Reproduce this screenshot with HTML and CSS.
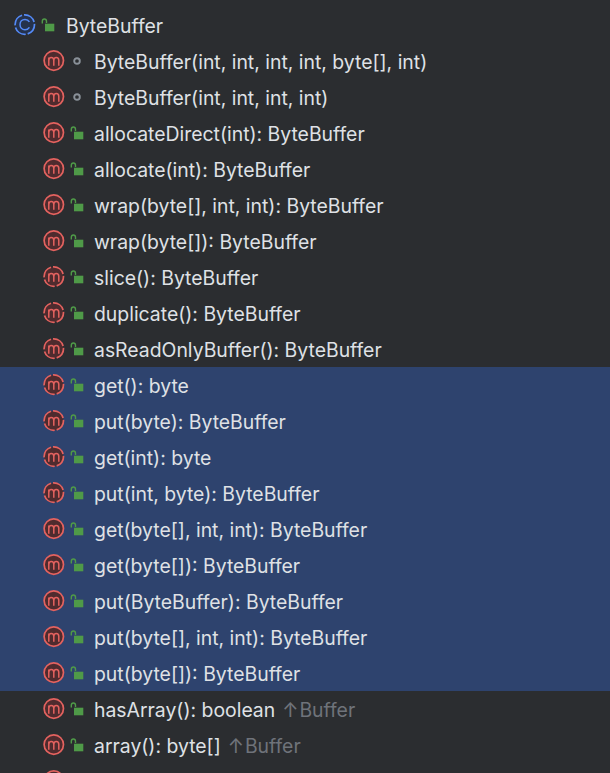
FILE: index.html
```html
<!DOCTYPE html>
<html lang="en">
<head>
<meta charset="utf-8">
<title>ByteBuffer structure</title>
<link rel="stylesheet" href="styles.css">
</head>
<body>
<svg class="defs" width="0" height="0" aria-hidden="true">
  <defs>
    <g id="m-letter">
      <path d="M5.8 15.7V7.4M5.8 10.4c0-1.7 1-2.8 2.5-2.8s2.500 1.1 2.500 2.8v5.3M10.8 10.4c0-1.7 1-2.8 2.500-2.800s2.500 1.100 2.500 2.800v5.300" fill="none" stroke="#e4625f" stroke-width="1.5"/>
    </g>
    <symbol id="m-solid" viewBox="0 0 22 22">
      <circle cx="10.8" cy="10.6" r="9.7" fill="#4f2b2e" stroke="#e4625f" stroke-width="1.7"/>
      <use href="#m-letter"/>
    </symbol>
    <symbol id="m-dash" viewBox="0 0 22 22">
      <circle cx="10.800" cy="10.600" r="9.700" fill="#4f2b2e" stroke="#e4625f" stroke-width="1.7" stroke-dasharray="13.2 2" stroke-dashoffset="1"/>
      <use href="#m-letter"/>
    </symbol>
    <symbol id="lock" viewBox="0 0 14 14">
      <path d="M1.3 5.5V3.2C1.3 2 2.2 1 3.4 1s2.1 1 2.1 2.2V5" fill="none" stroke="#4f9a48" stroke-width="1.4"/>
      <rect x="4" y="5.7" width="9.3" height="7.6" fill="#4f9a48"/>
    </symbol>
    <symbol id="class-c" viewBox="0 0 22 22">
      <circle cx="10.800" cy="10.600" r="9.700" fill="#25324d" stroke="#548af7" stroke-width="1.7" stroke-dasharray="13.2 2" stroke-dashoffset="1"/>
      <path d="M15.4 7.9A5 5 0 0 0 11 5.4c-3 0-5 2.200-5 5.200s2 5.200 5 5.200c1.900 0 3.400-.9 4.400-2.500" fill="none" stroke="#548af7" stroke-width="1.5"/>
    </symbol>
    <symbol id="dot" viewBox="0 0 8 8">
      <circle cx="4" cy="4" r="2.8" fill="none" stroke="#8a9199" stroke-width="1.9"/>
    </symbol>
  </defs>
</svg>
<ul class="tree">
  <li class="row root"><svg class="ico-main"><use href="#class-c"/></svg><svg class="ico-lock"><use href="#lock"/></svg><span>ByteBuffer</span></li>
  <li class="row"><svg class="ico-main"><use href="#m-solid"/></svg><span class="dot-box"><svg class="ico-dot"><use href="#dot"/></svg></span><span>ByteBuffer(int, int, int, int, byte[], int)</span></li>
  <li class="row"><svg class="ico-main"><use href="#m-solid"/></svg><span class="dot-box"><svg class="ico-dot"><use href="#dot"/></svg></span><span>ByteBuffer(int, int, int, int)</span></li>
  <li class="row"><svg class="ico-main"><use href="#m-solid"/></svg><svg class="ico-lock"><use href="#lock"/></svg><span>allocateDirect(int): ByteBuffer</span></li>
  <li class="row"><svg class="ico-main"><use href="#m-solid"/></svg><svg class="ico-lock"><use href="#lock"/></svg><span>allocate(int): ByteBuffer</span></li>
  <li class="row"><svg class="ico-main"><use href="#m-solid"/></svg><svg class="ico-lock"><use href="#lock"/></svg><span>wrap(byte[], int, int): ByteBuffer</span></li>
  <li class="row"><svg class="ico-main"><use href="#m-solid"/></svg><svg class="ico-lock"><use href="#lock"/></svg><span>wrap(byte[]): ByteBuffer</span></li>
  <li class="row"><svg class="ico-main"><use href="#m-dash"/></svg><svg class="ico-lock"><use href="#lock"/></svg><span>slice(): ByteBuffer</span></li>
  <li class="row"><svg class="ico-main"><use href="#m-dash"/></svg><svg class="ico-lock"><use href="#lock"/></svg><span>duplicate(): ByteBuffer</span></li>
  <li class="row"><svg class="ico-main"><use href="#m-dash"/></svg><svg class="ico-lock"><use href="#lock"/></svg><span>asReadOnlyBuffer(): ByteBuffer</span></li>
  <li class="row sel"><svg class="ico-main"><use href="#m-dash"/></svg><svg class="ico-lock"><use href="#lock"/></svg><span>get(): byte</span></li>
  <li class="row sel"><svg class="ico-main"><use href="#m-dash"/></svg><svg class="ico-lock"><use href="#lock"/></svg><span>put(byte): ByteBuffer</span></li>
  <li class="row sel"><svg class="ico-main"><use href="#m-dash"/></svg><svg class="ico-lock"><use href="#lock"/></svg><span>get(int): byte</span></li>
  <li class="row sel"><svg class="ico-main"><use href="#m-dash"/></svg><svg class="ico-lock"><use href="#lock"/></svg><span>put(int, byte): ByteBuffer</span></li>
  <li class="row sel"><svg class="ico-main"><use href="#m-solid"/></svg><svg class="ico-lock"><use href="#lock"/></svg><span>get(byte[], int, int): ByteBuffer</span></li>
  <li class="row sel"><svg class="ico-main"><use href="#m-solid"/></svg><svg class="ico-lock"><use href="#lock"/></svg><span>get(byte[]): ByteBuffer</span></li>
  <li class="row sel"><svg class="ico-main"><use href="#m-solid"/></svg><svg class="ico-lock"><use href="#lock"/></svg><span>put(ByteBuffer): ByteBuffer</span></li>
  <li class="row sel"><svg class="ico-main"><use href="#m-solid"/></svg><svg class="ico-lock"><use href="#lock"/></svg><span>put(byte[], int, int): ByteBuffer</span></li>
  <li class="row sel"><svg class="ico-main"><use href="#m-solid"/></svg><svg class="ico-lock"><use href="#lock"/></svg><span>put(byte[]): ByteBuffer</span></li>
  <li class="row"><svg class="ico-main"><use href="#m-solid"/></svg><svg class="ico-lock"><use href="#lock"/></svg><span>hasArray(): boolean</span><span class="inherit"><span class="arrow">↑</span>Buffer</span></li>
  <li class="row"><svg class="ico-main"><use href="#m-solid"/></svg><svg class="ico-lock"><use href="#lock"/></svg><span>array(): byte[]</span><span class="inherit"><span class="arrow">↑</span>Buffer</span></li>
  <li class="row"><svg class="ico-main"><use href="#m-solid"/></svg></li>
</ul>
</body>
</html>
```
FILE: styles.css
```css
html, body {
  margin: 0;
  height: 100%;
  background: #2b2d30;
  overflow: hidden;
}
.defs {
  display: block;
  height: 0;
}
.tree {
  list-style: none;
  margin: 0;
  padding: 7px 0 0;
  font-family: Inter, "Noto Sans", sans-serif;
  font-size: 19.4px;
  color: #dfe1e5;
}
.row {
  display: flex;
  align-items: center;
  height: 36px;
  padding-left: 43px;
  white-space: nowrap;
  box-sizing: border-box;
}
.row > span:not(.dot-box) {
  position: relative;
  top: 0.5px;
}
.root {
  padding-left: 14px;
}
.root .ico-lock {
  margin-right: 11px;
}
.sel {
  background: #2e436e;
}
.ico-main {
  width: 22px;
  height: 22px;
  flex: none;
  margin-right: 5px;
}
.ico-lock {
  width: 14px;
  height: 14px;
  flex: none;
  margin-right: 10px;
}
.dot-box {
  display: flex;
  width: 14px;
  height: 14px;
  align-items: center;
  justify-content: center;
  margin-right: 10px;
}
.ico-dot {
  width: 8px;
  height: 8px;
}
.inherit {
  color: #6f737a;
  margin-left: 7px;
}
.arrow {
  margin-right: 1px;
}
```
